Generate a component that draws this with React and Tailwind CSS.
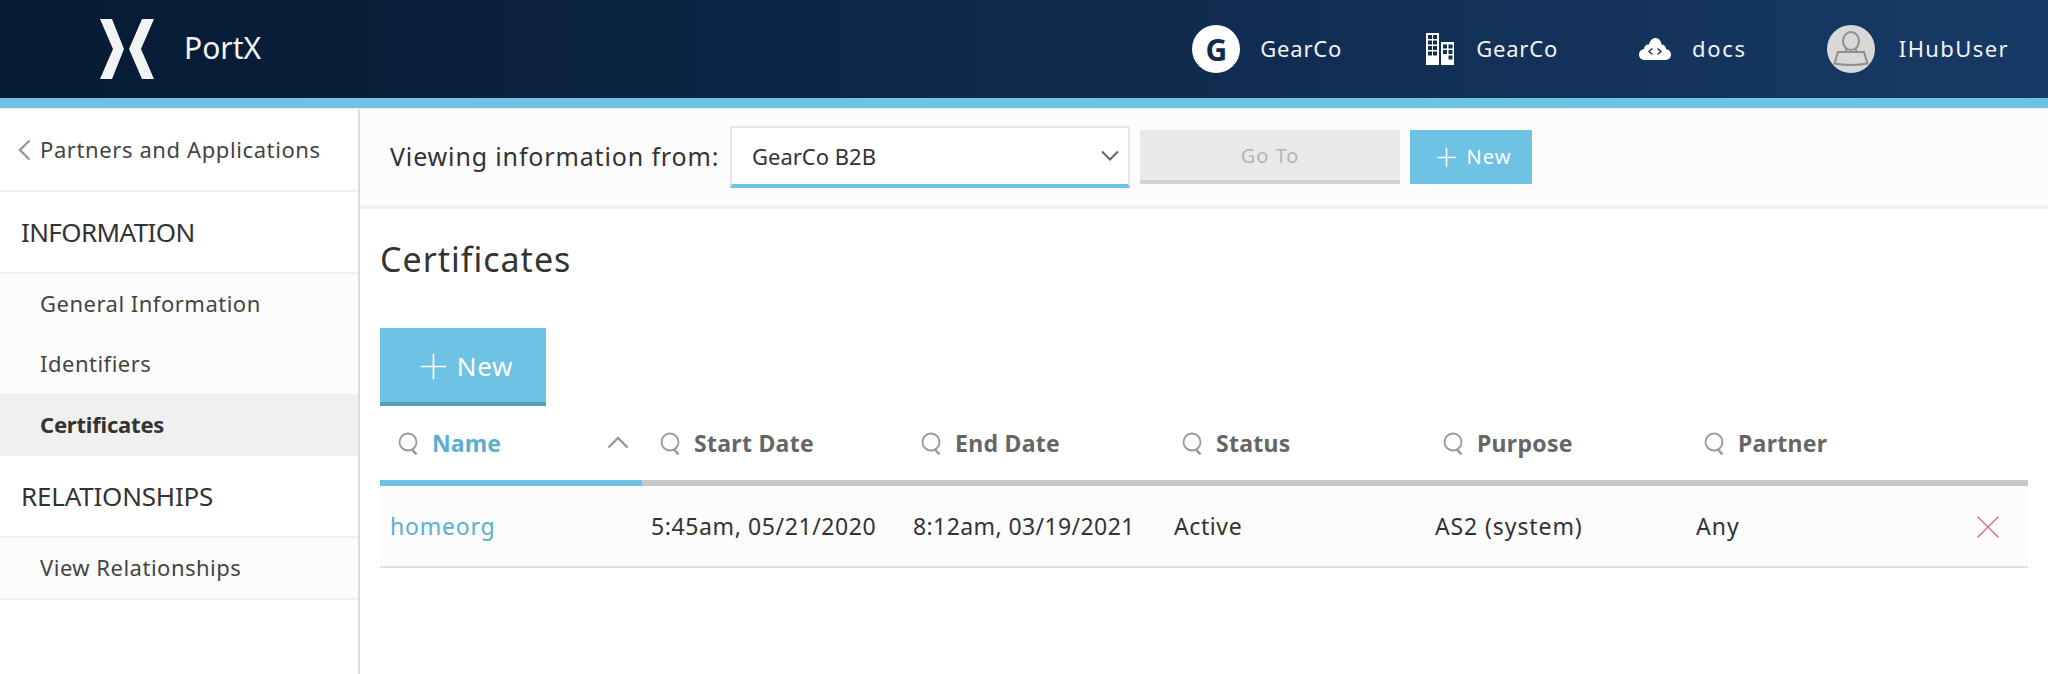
import { Plus, X } from "lucide-react"

function SearchIcon() {
  return (
    <svg width="22" height="24" viewBox="0 0 22 24" fill="none" className="shrink-0">
      <circle cx="10" cy="10" r="8.500" stroke="#999" strokeWidth="1.800" />
      <path d="M14.500 18l4 4.500" stroke="#999" strokeWidth="2.600" />
    </svg>
  )
}

function Logo() {
  return (
    <svg width="54" height="60" viewBox="0 0 54 60" fill="#f2f3f5">
      <path d="M0 0h12l12 30-12 30H0l13-30z" />
      <path d="M54 0H42L29 30l13 30h12L41 30z" />
    </svg>
  )
}

function BuildingIcon() {
  return (
    <svg width="28" height="32" viewBox="0 0 28 32" fill="none">
      <path
        fillRule="evenodd"
        fill="#fff"
        d="M0 0h13v32H0zM2 2v4h4V2zM7 2v4h4V2zM2 7.500v4h4v-4zM7 7.500v4h4v-4zM2 13v4h4v-4zM7 13v4h4v-4zM2 18.500v4h4v-4zM7 18.500v4h4v-4z"
      />
      <path
        fillRule="evenodd"
        fill="#fff"
        d="M15 9h13v23H15zM17 11.500v4h4v-4zM22.500 11.500v4h4v-4zM17 17v4h4v-4zM22.500 17v4h4v-4zM22.500 22.500v4h4v-4z"
      />
    </svg>
  )
}

function CloudIcon() {
  return (
    <svg width="32" height="22" viewBox="0 0 32 22" fill="none">
      <path
        fill="#fff"
        d="M6 22C2 22 0 19.500 0 16.500 0 13.500 2 11.500 5 11c0-3 2.500-5 5-4.500C11 2.500 13.500 0 16.500 0s5.500 2.500 6 6.500c2.500 0 4.500 2 4.500 4.500 3 .5 5 2.500 5 5.500s-2 5.500-6 5.500z"
      />
      <path d="M13.500 10.500l-3.500 3 3.500 3M18.500 10.500l3.500 3-3.500 3" stroke="#15315a" strokeWidth="1.400" />
    </svg>
  )
}

function UserAvatar() {
  return (
    <svg width="48" height="48" viewBox="0 0 48 48" fill="none">
      <circle cx="24" cy="24" r="24" fill="#d8d8d8" />
      <ellipse cx="24" cy="16" rx="8" ry="9" stroke="#8e8e8e" strokeWidth="2" />
      <path d="M11 27h26l3.500 11.500q-16.500 3-33 0z" stroke="#8e8e8e" strokeWidth="2" />
      <path d="M19 24v3M29 24v3" stroke="#8e8e8e" strokeWidth="2" />
    </svg>
  )
}

function HeaderItem({ icon, label, className, gap, tracking }) {
  return (
    <div className={`flex items-center ${className}`}>
      <div className={gap}>{icon}</div>
      <span className={`text-[22px] text-[#f2f3f5] pb-[2px] ${tracking}`}>{label}</span>
    </div>
  )
}

function TopBar() {
  return (
    <header className="h-[98px] bg-gradient-to-r from-[#061a32] to-[#173a66] flex items-center justify-between pr-[39px] shrink-0">
      <div className="flex items-center pl-[100px] gap-[30px]">
        <Logo />
        <span className="text-[30px] text-[#f2f3f5] -mt-[4px]">PortX</span>
      </div>
      <div className="flex items-center">
        <HeaderItem
          className="mr-[84px]"
          gap="mr-[20px]"
          tracking="tracking-[0.8px]"
          label="GearCo"
          icon={
            <div className="w-[48px] h-[48px] rounded-full bg-white flex items-center justify-center text-[#12294a] text-[30px] font-bold">G</div>
          }
        />
        <HeaderItem className="mr-[81px]" gap="mr-[22px]" tracking="tracking-[0.8px]" label="GearCo" icon={<BuildingIcon />} />
        <HeaderItem className="mr-[80px]" gap="mr-[21px]" tracking="tracking-[1.7px]" label="docs" icon={<CloudIcon />} />
        <HeaderItem gap="mr-[24px]" tracking="tracking-[1.4px]" label="IHubUser" icon={<UserAvatar />} />
      </div>
    </header>
  )
}

function SideHeading({ children, tracking }) {
  return (
    <div className={`h-[82px] flex items-center pl-[21px] text-[26px] text-[#333] border-b-2 border-[#f0f0f0] ${tracking}`}>{children}</div>
  )
}

function SideItem({ children, active, last }) {
  return (
    <div
      className={`flex items-center pl-[40px] pb-[2px] text-[22px] ${
        active ? "bg-[#f0f0f0] font-bold text-[#333] h-[62px] tracking-[-0.2px]" : "bg-[#fcfcfc] text-[#444] tracking-[0.5px]"
      } ${last ? "border-b-2 border-[#f0f0f0] h-[62px]" : active ? "" : "h-[60px]"}`}
    >
      {children}
    </div>
  )
}

function Sidebar() {
  return (
    <aside className="w-[360px] shrink-0 border-r-2 border-[#dcdcdc] bg-white">
      <div className="h-[83px] flex items-center pl-[18px] gap-[9px] text-[22px] text-[#444] tracking-[0.6px] border-b-2 border-[#f0f0f0]">
        <svg width="13" height="22" viewBox="0 0 13 22" fill="none" stroke="#999" strokeWidth="2.400">
          <path d="M11.500 1.500L2 11l9.500 9.500" />
        </svg>
        <span>Partners and Applications</span>
      </div>
      <SideHeading tracking="tracking-[-0.6px]">INFORMATION</SideHeading>
      <SideItem>General Information</SideItem>
      <SideItem>Identifiers</SideItem>
      <SideItem active>Certificates</SideItem>
      <SideHeading tracking="tracking-[-0.2px]">RELATIONSHIPS</SideHeading>
      <SideItem last>View Relationships</SideItem>
    </aside>
  )
}

function SelectBar() {
  return (
    <div className="h-[100px] bg-[#fcfcfc] border-b-4 border-[#f0f0f0] flex items-center pl-[30px]">
      <span className="w-[340px] shrink-0 text-[25px] text-[#333] tracking-[0.85px]">Viewing information from:</span>
      <div className="w-[400px] h-[62px] bg-white border-2 border-[#e6e6e6] border-b-4 border-b-[#6ec2e4] flex items-center justify-between pl-[20px] pr-[8px] text-[22px] text-[#333]">
        <span>GearCo B2B</span>
        <svg width="20" height="12" viewBox="0 0 20 12" fill="none" stroke="#666" strokeWidth="2">
          <path d="M2 1.500l8 8 8-8" />
        </svg>
      </div>
      <button className="ml-[10px] w-[260px] h-[54px] pt-[2px] bg-[#e9e9e9] border-b-4 border-[#d2d2d2] text-[20px] text-[#b5b5b5] tracking-[1px]">Go To</button>
      <button className="ml-[10px] w-[122px] h-[54px] bg-[#6ec2e4] text-[20px] text-white tracking-[1px] flex items-center justify-center gap-[5px]">
        <Plus size={31} strokeWidth={1.200} />
        New
      </button>
    </div>
  )
}

const columns = ["Start Date", "End Date", "Status", "Purpose", "Partner"]

function CertTable() {
  return (
    <div className="w-[1648px]">
      <div className="flex h-[80px] border-b-[6px] border-[#c8c8c8]">
        <div className="w-[262px] h-[80px] -mb-[6px] pt-[1px] relative flex items-center pl-[18px] gap-[12px] text-[23px] font-bold tracking-[0.1px] text-[#58afd1] border-b-[6px] border-[#6ec2e4]">
          <SearchIcon />
          <span>Name</span>
          <svg width="22" height="14" viewBox="0 0 22 14" fill="none" stroke="#999" strokeWidth="2.400" className="absolute right-[13px] top-[29px]">
            <path d="M1.500 12.500L11 3l9.500 9.500" />
          </svg>
        </div>
        {columns.map((c) => (
          <div key={c} className="w-[261px] pt-[1px] flex items-center pl-[18px] gap-[12px] text-[23px] font-bold tracking-[0.3px] text-[#666]">
            <SearchIcon />
            <span>{c}</span>
          </div>
        ))}
      </div>
      <div className="flex h-[82px] pt-[1px] items-center bg-[#fcfcfc] border-b-2 border-[#e0e0e0] text-[23px] tracking-[0.6px] text-[#333]">
        <div className="w-[262px] pl-[10px] text-[#58afd1] tracking-[0.8px]">homeorg</div>
        <div className="w-[261px] pl-[9px]">5:45am, 05/21/2020</div>
        <div className="w-[261px] pl-[10px] tracking-[0.4px]">8:12am, 03/19/2021</div>
        <div className="w-[261px] pl-[10px]">Active</div>
        <div className="w-[261px] pl-[10px] tracking-[0.9px]">AS2 (system)</div>
        <div className="w-[261px] pl-[10px] tracking-[1px]">Any</div>
        <X size={40} strokeWidth={0.900} className="text-[#d9737f] ml-auto mr-[20px]" />
      </div>
    </div>
  )
}

export default function App() {
  return (
    <div className="h-[674px] flex flex-col overflow-hidden bg-white font-['Noto_Sans',sans-serif]">
      <TopBar />
      <div className="h-[11px] bg-[#6ec2e4] border-b border-[#eee] shrink-0" />
      <div className="flex flex-1">
        <Sidebar />
        <main className="flex-1">
          <SelectBar />
          <div className="pl-[20px]">
            <h1 className="text-[34px] text-[#333] tracking-[1px] mt-[27px] leading-[46px]">Certificates</h1>
            <button className="mt-[46px] w-[166px] h-[78px] pt-[2px] bg-[#6ec2e4] border-b-4 border-[#559fbb] text-white text-[26px] flex items-center justify-center gap-[3px] tracking-[0.7px]">
              <Plus size={41} strokeWidth={1} />
              New
            </button>
            <CertTable />
          </div>
        </main>
      </div>
    </div>
  )
}
